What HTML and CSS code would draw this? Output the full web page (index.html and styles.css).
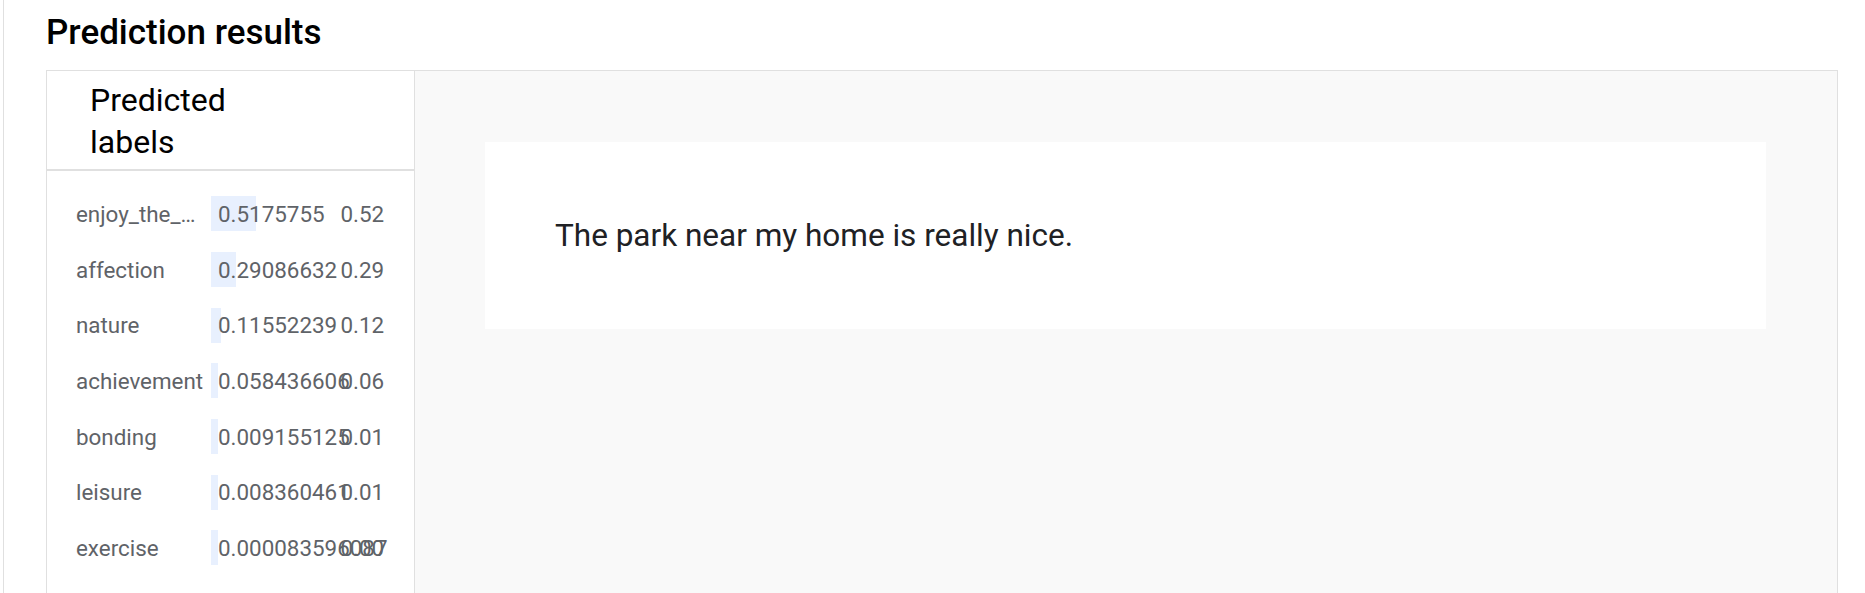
FILE: index.html
```html
<!DOCTYPE html>
<html lang="en">
<head>
<meta charset="utf-8">
<title>Prediction results</title>
<link rel="stylesheet" href="styles.css">
</head>
<body>
<div class="frame">
  <h2 class="title">Prediction results</h2>
  <div class="panel">
    <div class="labels-col">
      <div class="labels-head"><span class="head-text">Predicted labels</span></div>
      <div class="rows">
        <div class="row"><span class="label">enjoy_the_moment</span><span class="value"><span class="bar" style="width:44.5px"></span><span class="num">0.5175755</span></span><span class="score">0.52</span></div>
        <div class="row"><span class="label">affection</span><span class="value"><span class="bar" style="width:25px"></span><span class="num">0.29086632</span></span><span class="score">0.29</span></div>
        <div class="row"><span class="label">nature</span><span class="value"><span class="bar" style="width:9.9px"></span><span class="num">0.11552239</span></span><span class="score">0.12</span></div>
        <div class="row"><span class="label">achievement</span><span class="value"><span class="bar" style="width:7px"></span><span class="num">0.058436606</span></span><span class="score">0.06</span></div>
        <div class="row"><span class="label">bonding</span><span class="value"><span class="bar" style="width:7px"></span><span class="num">0.009155125</span></span><span class="score">0.01</span></div>
        <div class="row"><span class="label">leisure</span><span class="value"><span class="bar" style="width:7px"></span><span class="num">0.008360461</span></span><span class="score">0.01</span></div>
        <div class="row"><span class="label">exercise</span><span class="value"><span class="bar" style="width:7px"></span><span class="num">0.000083596087</span></span><span class="score">0.00</span></div>
      </div>
    </div>
    <div class="input-area">
      <div class="card">The park near my home is really nice.</div>
    </div>
  </div>
</div>
</body>
</html>
```

FILE: styles.css
```css
html, body {
  margin: 0;
  padding: 0;
  background: #ffffff;
  overflow: hidden;
}
body {
  font-family: Roboto, "Noto Sans", sans-serif;
  color: #202124;
}
.frame {
  margin-left: 3px;
  border-left: 1px solid #e0e0e0;
  padding: 12px 27px 0 42px;
  min-height: 700px;
}
.title {
  margin: 0 0 17px 0;
  font-size: 35px;
  line-height: 41px;
  font-weight: 500;
  color: #000000;
}
.panel {
  display: flex;
  border: 1px solid #e0e0e0;
  min-height: 600px;
}
.labels-col {
  width: 367px;
  flex: none;
  border-right: 1px solid #e0e0e0;
  background: #ffffff;
}
.labels-head {
  height: 100px;
  box-sizing: border-box;
  padding: 9px 0 0 43px;
  border-bottom: 2px solid #e0e0e0;
  font-size: 32px;
  line-height: 41.7px;
  color: #000000;
}
.head-text {
  display: block;
  width: 200px;
}
.rows {
  padding-top: 15px;
}
.row {
  display: grid;
  grid-template-columns: 135px 129.5px auto;
  align-items: center;
  height: 55.68px;
  padding-left: 29px;
  font-size: 22.4px;
  color: #5f6368;
}
.label {
  max-width: 130px;
  white-space: nowrap;
  overflow: hidden;
  text-overflow: ellipsis;
}
.value {
  position: relative;
  height: 35px;
  display: flex;
  align-items: center;
  white-space: nowrap;
}
.bar {
  position: absolute;
  left: 0;
  top: 0;
  bottom: 0;
  background: #e8f0fe;
}
.num {
  position: relative;
  padding-left: 7px;
}
.score {
  white-space: nowrap;
}
.input-area {
  flex: 1;
  background: #f9f9f9;
  padding: 71px 71px 0 70px;
}
.card {
  background: #ffffff;
  padding: 70px;
  font-size: 31.5px;
  line-height: 47px;
  color: #202124;
}
```
